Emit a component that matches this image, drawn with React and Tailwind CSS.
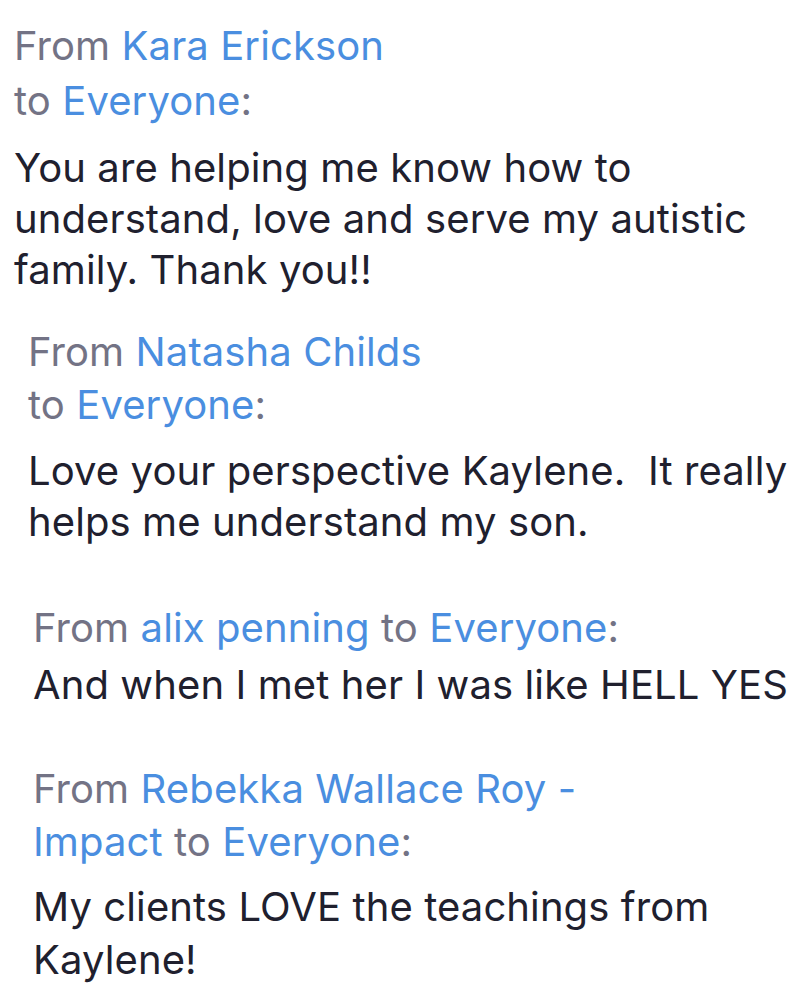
export default function App() {
  const gray = "text-[#737385]";
  const blue = "text-[#4a8ee0]";
  return (
    <div className="w-[800px] h-[1000px] bg-white overflow-hidden text-[40px] tracking-[0.1px] text-[#20202e]" style={{ fontFamily: "Inter, 'Noto Sans', sans-serif" }}>
      <div className="pl-[14px] pt-[18px]">
        <div className="leading-[55px]">
          <div><span className={gray}>From </span><span className={blue}>Kara Erickson</span></div>
          <div><span className={gray}>to </span><span className={blue}>Everyone</span><span className={gray}>:</span></div>
        </div>
        <div className="mt-[14px] leading-[51px]">
          You are helping me know how to<br />understand, love and serve my autistic<br />family. Thank you!!
        </div>
      </div>
      <div className="pl-[28px] mt-[30px]">
        <div className="leading-[53px]">
          <div><span className={gray}>From </span><span className={blue}>Natasha Childs</span></div>
          <div><span className={gray}>to </span><span className={blue}>Everyone</span><span className={gray}>:</span></div>
        </div>
        <div className="mt-[14px] leading-[51px] whitespace-pre">
          {"Love your perspective Kaylene.  It really\nhelps me understand my son."}
        </div>
      </div>
      <div className="pl-[33px] mt-[54px]">
        <div className="leading-[53px]">
          <span className={gray}>From </span><span className={blue}>alix penning</span><span className={gray}> to </span><span className={blue}>Everyone</span><span className={gray}>:</span>
        </div>
        <div className="mt-[5px] leading-[51px] whitespace-nowrap">And when I met her I was like HELL YES</div>
      </div>
      <div className="pl-[33px] mt-[52px]">
        <div className="leading-[53px]">
          <div><span className={gray}>From </span><span className={blue}>Rebekka Wallace Roy -</span></div>
          <div><span className={blue}>Impact</span><span className={gray}> to </span><span className={blue}>Everyone</span><span className={gray}>:</span></div>
        </div>
        <div className="mt-[12px] leading-[53px]">
          My clients LOVE the teachings from<br />Kaylene!
        </div>
      </div>
    </div>
  );
}
